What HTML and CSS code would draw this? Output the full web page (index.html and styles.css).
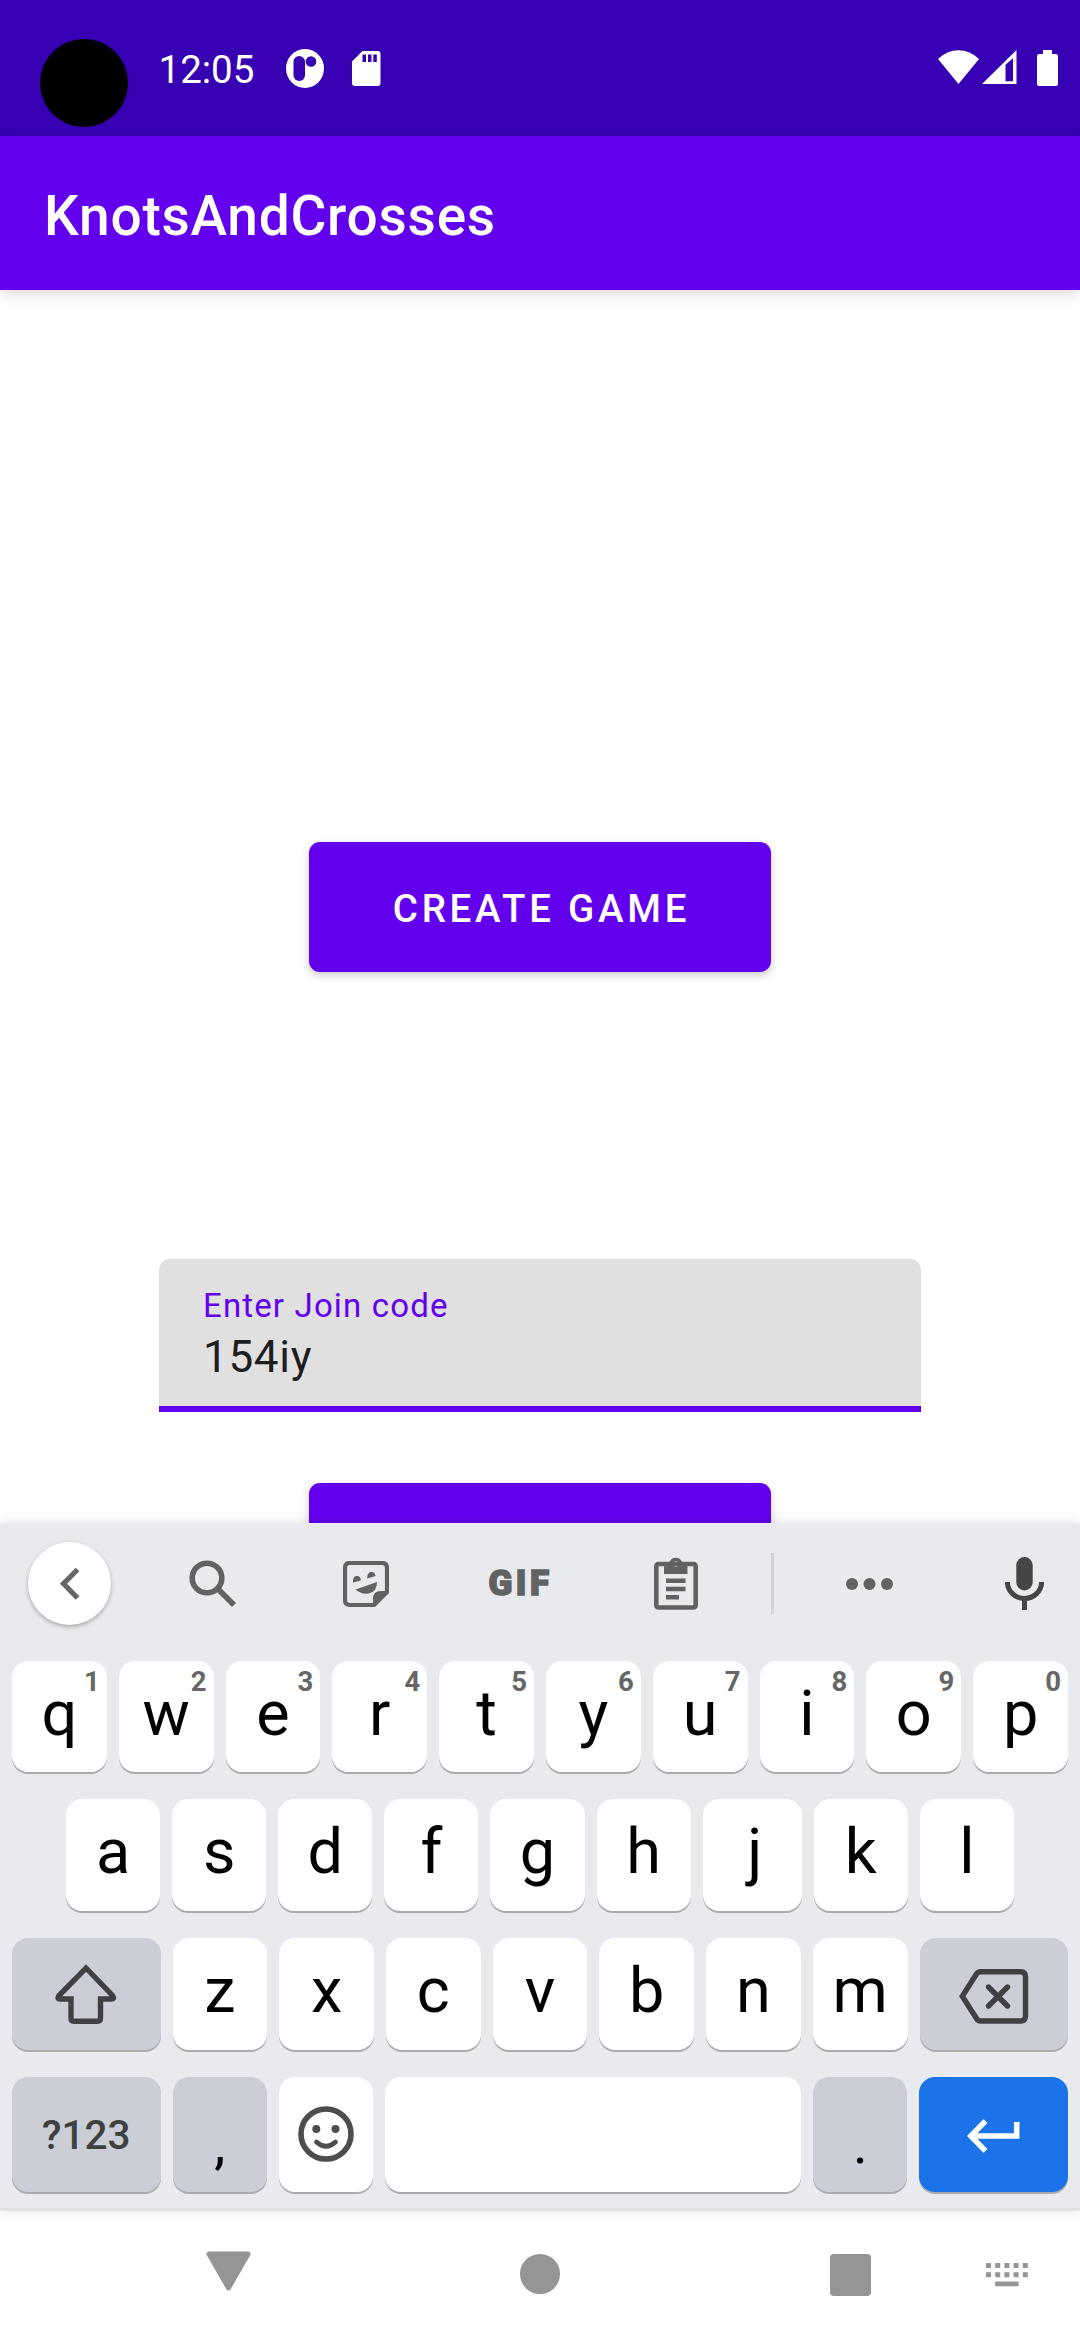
FILE: index.html
```html
<!DOCTYPE html>
<html lang="en">
<head>
<meta charset="utf-8">
<title>KnotsAndCrosses</title>
<link rel="stylesheet" href="styles.css">
</head>
<body>
<div class="screen">
  <header class="status">
    <span class="camera"></span>
    <span class="clock">12:05</span>
    <svg class="status-app" width="38" height="39" viewBox="0 0 38 39"><ellipse cx="19" cy="19.5" rx="19" ry="19.5" fill="#fff"/><rect x="7.500" y="7" width="11.500" height="25" rx="5.700" fill="#3700b3"/><circle cx="25" cy="12.500" r="5.300" fill="#3700b3"/></svg>
    <svg class="status-sd" width="29" height="35" viewBox="0 0 29 35"><path fill="#fff" fill-rule="evenodd" d="M10.500 0H25.500Q28.500 0 28.500 3V32Q28.500 35 25.500 35H3Q0 35 0 32V10.500ZM10.500 3.500V11H14V3.500ZM16 3.500V11H19.500V3.500ZM21.300 3.500V11H24.800V3.500Z"/></svg>
    <span class="spacer"></span>
    <svg class="status-wifi" width="42" height="34" viewBox="0 0 42 34"><path fill="#fff" d="M0 9Q9 .3 20.500 .3T41 9L20.500 34Z"/></svg>
    <svg class="status-cell" width="35" height="34" viewBox="0 0 35 34"><path fill="#fff" fill-rule="evenodd" d="M34.500 0V34H0ZM23.500 14.800V31.200H31V8.300Z"/></svg>
    <svg class="status-battery" width="21" height="36" viewBox="0 0 21 36"><path fill="#fff" d="M6 0H15V4H19Q21 4 21 6V34Q21 36 19 36H2Q0 36 0 34V6Q0 4 2 4H6Z"/></svg>
  </header>
  <div class="appbar"><h1 class="title">KnotsAndCrosses</h1></div>
  <main class="content">
    <button class="button">CREATE GAME</button>
    <div class="field">
      <label class="field-label">Enter Join code</label>
      <div class="field-value">154iy</div>
    </div>
    <button class="button button-join"></button>
  </main>
  <section class="keyboard">
    <div class="tools">
      <span class="back"><svg width="20" height="34" viewBox="0 0 20 34"><path d="M17.500 2.500L3.500 16.700L17.500 31" fill="none" stroke="#666" stroke-width="5.200"/></svg></span>
      <svg width="48" height="48" viewBox="0 0 48 48"><circle cx="18" cy="18" r="14.800" fill="none" stroke="#616263" stroke-width="5.600"/><path d="M29.500 29.500L45 45" stroke="#616263" stroke-width="5.600"/></svg>
      <svg width="46" height="46" viewBox="0 0 46 46"><path d="M7 2H39Q44 2 44 7V31L31 44H7Q2 44 2 39V7Q2 2 7 2Z" fill="none" stroke="#616263" stroke-width="4.200"/><path d="M30 45V38Q30 30 38 30H45V32L32 45ZM12.500 28.500L34 21Q34 31 25.500 32.500Q18 33.500 12.500 28.500ZM10 21.700Q9.500 15.500 13.500 15T18 19.200ZM24.200 17.500Q24 11.500 28 11T32.500 15Z" fill="#616263"/></svg>
      <span class="gif">GIF</span>
      <svg width="44" height="53" viewBox="0 0 44 53"><path d="M5 7H39Q41.700 7 41.700 10V47.500Q41.700 50.500 39 50.500H5Q2.300 50.500 2.300 47.500V10Q2.300 7 5 7Z" fill="none" stroke="#616263" stroke-width="4.600"/><path fill="#616263" fill-rule="evenodd" d="M10 5H15.500A6.700 6.700 0 0 1 28 5H33.500V17H10ZM21.800 4.300A2.700 2.700 0 1 0 21.800 9.700A2.700 2.700 0 1 0 21.800 4.300ZM12 21.500H31.500V26H12ZM12 29.700H31.500V34.200H12ZM12 38H25V42.500H12Z"/></svg>
      <span class="rule"></span>
      <svg width="47" height="12" viewBox="0 0 47 12"><g fill="#616263"><circle cx="6" cy="6" r="6"/><circle cx="23.500" cy="6" r="6"/><circle cx="41" cy="6" r="6"/></g></svg>
      <svg class="mic" width="39" height="53" viewBox="0 0 39 53"><rect x="11.300" y="0" width="16.400" height="33.500" rx="8.200" fill="#444547"/><path d="M2.400 25A17.100 16.500 0 0 0 36.600 25M19.500 42V53" fill="none" stroke="#444547" stroke-width="5"/></svg>
    </div>
    <div class="row row-numbers">
      <span class="key">q<sup class="hint">1</sup></span><span class="key">w<sup class="hint">2</sup></span><span class="key">e<sup class="hint">3</sup></span><span class="key">r<sup class="hint">4</sup></span><span class="key">t<sup class="hint">5</sup></span><span class="key">y<sup class="hint">6</sup></span><span class="key">u<sup class="hint">7</sup></span><span class="key">i<sup class="hint">8</sup></span><span class="key">o<sup class="hint">9</sup></span><span class="key">p<sup class="hint">0</sup></span>
    </div>
    <div class="row row-home">
      <span class="key">a</span><span class="key">s</span><span class="key">d</span><span class="key">f</span><span class="key">g</span><span class="key">h</span><span class="key key-j">j</span><span class="key">k</span><span class="key">l</span>
    </div>
    <div class="row row-lower">
      <span class="key key-wide key-icon key-gray"><svg width="62" height="60" viewBox="0 0 62 60"><path d="M31 4L57.500 31.500Q60 35 56 35H45.500V54Q45.500 57.200 42.500 57.200H19Q16 57.200 16 54V35H5.500Q1.500 35 4 31.500Z" fill="none" stroke="#3f4041" stroke-width="5.400"/></svg></span>
      <span class="key">z</span><span class="key">x</span><span class="key">c</span><span class="key">v</span><span class="key">b</span><span class="key">n</span><span class="key">m</span>
      <span class="key key-wide key-delete key-gray"><svg width="70" height="55" viewBox="0 0 70 55"><path d="M21.500 2.700H61.500Q66.500 2.700 66.500 7.700V47Q66.500 52 61.500 52H21.500Q19 52 17.500 49.500L3.300 27.300L17.500 5Q19 2.700 21.500 2.700Z" fill="none" stroke="#3f4041" stroke-width="5.400"/><path d="M29.500 18L48.500 37M48.500 18L29.500 37" stroke="#3f4041" stroke-width="5.400" stroke-linecap="round"/></svg></span>
    </div>
    <div class="row row-bottom">
      <span class="key key-wide key-gray key-symbols">?123</span>
      <span class="key key-gray key-mark">,</span>
      <span class="key key-emoji"><svg width="56" height="56" viewBox="0 0 56 56"><circle cx="28" cy="28" r="25" fill="none" stroke="#4d4d4d" stroke-width="5.600"/><circle cx="18.300" cy="23" r="4" fill="#4d4d4d"/><circle cx="37.500" cy="23" r="4" fill="#4d4d4d"/><path d="M18.500 36Q28 44.500 37.500 36" fill="none" stroke="#4d4d4d" stroke-width="4.800" stroke-linecap="round"/></svg></span>
      <span class="key key-space"></span>
      <span class="key key-gray key-mark">.</span>
      <span class="key key-wide key-enter"><svg width="53" height="34" viewBox="0 0 53 34"><path d="M18.500 2L3.800 17L18.500 32M4.500 17H49.700V3" fill="none" stroke="#fff" stroke-width="5.500"/></svg></span>
    </div>
  </section>
  <nav class="navbar">
    <svg width="45" height="40" viewBox="0 0 45 40"><path d="M3 3H42L22.500 37Z" fill="#959595" stroke="#959595" stroke-width="5" stroke-linejoin="round"/></svg>
    <span class="home"></span>
    <span class="recent"></span>
    <svg width="42" height="24" viewBox="0 0 42 24"><path fill="#959595" d="M0 0H5V5H0ZM9.200 0H14.200V5H9.200ZM18.400 0H23.400V5H18.400ZM27.600 0H32.600V5H27.600ZM36.800 0H41.800V5H36.800ZM0 9.300H5V14.300H0ZM9.200 9.300H14.200V14.300H9.200ZM18.400 9.300H23.400V14.300H18.400ZM27.600 9.300H32.600V14.300H27.600ZM36.800 9.300H41.800V14.300H36.800ZM9.200 18.500H32.600V23.300H9.200Z"/></svg>
  </nav>
</div>
</body>
</html>
```
FILE: styles.css
```css
* { box-sizing: border-box; }
body { margin: 0; font-family: Roboto, "Liberation Sans", sans-serif; }
svg { display: block; flex: none; }

.screen {
  width: 1080px;
  height: 2340px;
  display: flex;
  flex-direction: column;
  overflow: hidden;
  background: #fff;
}

.status {
  flex: none;
  height: 136px;
  padding: 39px 22px 0 40px;
  display: flex;
  align-items: flex-start;
  background: #3700b3;
  color: #fff;
}
.camera { width: 88px; height: 88px; border-radius: 50%; background: #000; }
.clock { width: 126.500px; padding-left: 30.500px; margin-top: 7.500px; font-size: 38.500px; line-height: 45px; }
.status-app { margin: 10px 0 0 31px; }
.status-sd { margin: 12px 0 0 28px; }
.spacer { flex: 1; }
.status-wifi { margin: 11px 0 0; }
.status-cell { margin: 11px 20px 0 2.500px; }
.status-battery { margin: 11px 0 0; }

.appbar {
  flex: none;
  position: relative;
  height: 154px;
  padding: 50px 44px 0;
  background: #6200ee;
  color: #fff;
  box-shadow: 0 4px 14px rgba(0, 0, 0, .15);
}
.title { margin: 0; font-size: 55px; line-height: 60px; font-weight: 500; letter-spacing: .750px; }

.content {
  flex: none;
  height: 1233px;
  padding-top: 552px;
  display: flex;
  flex-direction: column;
  align-items: center;
  overflow: hidden;
}
.button {
  flex: none;
  width: 462px;
  height: 130px;
  border: 0;
  padding: 4px 0 0 3px;
  border-radius: 11px;
  background: #6200ee;
  color: #fff;
  font: 500 38.500px/46px Roboto, "Liberation Sans", sans-serif;
  letter-spacing: 3.750px;
  box-shadow: 0 3px 8px rgba(0, 0, 0, .22);
}
.button-join { margin-top: 71px; }
.field {
  flex: none;
  width: 762px;
  height: 153px;
  margin-top: 287px;
  padding: 27px 44px 0;
  background: #e0e0e0;
  border-bottom: 6px solid #6200ee;
  border-radius: 11px 11px 0 0;
}
.field-label { display: block; font-size: 33px; line-height: 40px; letter-spacing: 1.150px; color: #6200ee; }
.field-value { margin-top: 5px; font-size: 44px; line-height: 52px; letter-spacing: .700px; color: #1d1d1d; }

.keyboard {
  flex: none;
  position: relative;
  height: 688px;
  background: #e8eaed;
  border-bottom: 3px solid #e0e0e0;
  box-shadow: 0 0 12px rgba(0, 0, 0, .12);
}
.tools {
  height: 138px;
  padding-bottom: 17px;
  display: grid;
  grid-template-columns: 139px 148px 158px 150px 162px 30px 165px 128px;
  align-items: center;
  justify-items: center;
}
.back {
  width: 83px;
  height: 83px;
  padding-left: 1px;
  border-radius: 50%;
  display: flex;
  align-items: center;
  justify-content: center;
  background: #fff;
  box-shadow: 0 2px 4px rgba(0, 0, 0, .28);
}
.gif {
  padding-left: 1px;
  font-size: 35px;
  line-height: 40px;
  font-weight: 900;
  letter-spacing: 3.500px;
  color: #616263;
  -webkit-text-stroke: 1.500px #616263;
}
.rule { width: 3px; height: 61px; background: #d0d2d5; }
.mic { margin-left: 16px; }

.row { display: flex; gap: 12px; padding: 0 12px; }
.row-numbers { height: 111px; }
.row-home { height: 112px; margin-top: 27px; padding: 0 66px; }
.row-lower { height: 112px; margin-top: 27px; }
.row-bottom { height: 115px; margin-top: 27px; }
.key {
  position: relative;
  flex: 1 1 0;
  display: flex;
  align-items: center;
  justify-content: center;
  padding-bottom: 6px;
  border-radius: 16px;
  background: #fff;
  box-shadow: 0 2px 0 #a9abad;
  color: #000;
  font-size: 63px;
  line-height: 74px;
}
.key-j { padding-left: 5px; }
.key-wide { flex: 0 0 148.500px; padding-bottom: 0; }
.key-icon { padding-bottom: 1px; }
.key-delete { padding-top: 4px; }
.key-emoji { padding-bottom: 2px; }
.key-space { flex: 0 0 416px; }
.key-gray { background: #cbced6; }
.key-enter { background: #1a73e8; padding-top: 2px; }
.key-symbols { font-size: 40.500px; font-weight: 500; color: #3f4041; }
.key-mark { font-size: 56px; padding: 18px 0 0; }
.hint {
  position: absolute;
  top: 5px;
  right: 7px;
  font-size: 27.500px;
  line-height: 32px;
  font-weight: 700;
  color: #666;
}

.navbar {
  flex: none;
  height: 129px;
  padding-top: 40px;
  display: flex;
  align-items: flex-start;
  padding-left: 206px;
  background: #fff;
}
.home { width: 40px; height: 40px; margin: 3px 0 0 269px; border-radius: 50%; background: #959595; }
.recent { width: 41px; height: 42px; margin: 3px 115px 0 270px; border-radius: 4px; background: #959595; }
.navbar svg:last-child { margin-top: 12px; }
```
